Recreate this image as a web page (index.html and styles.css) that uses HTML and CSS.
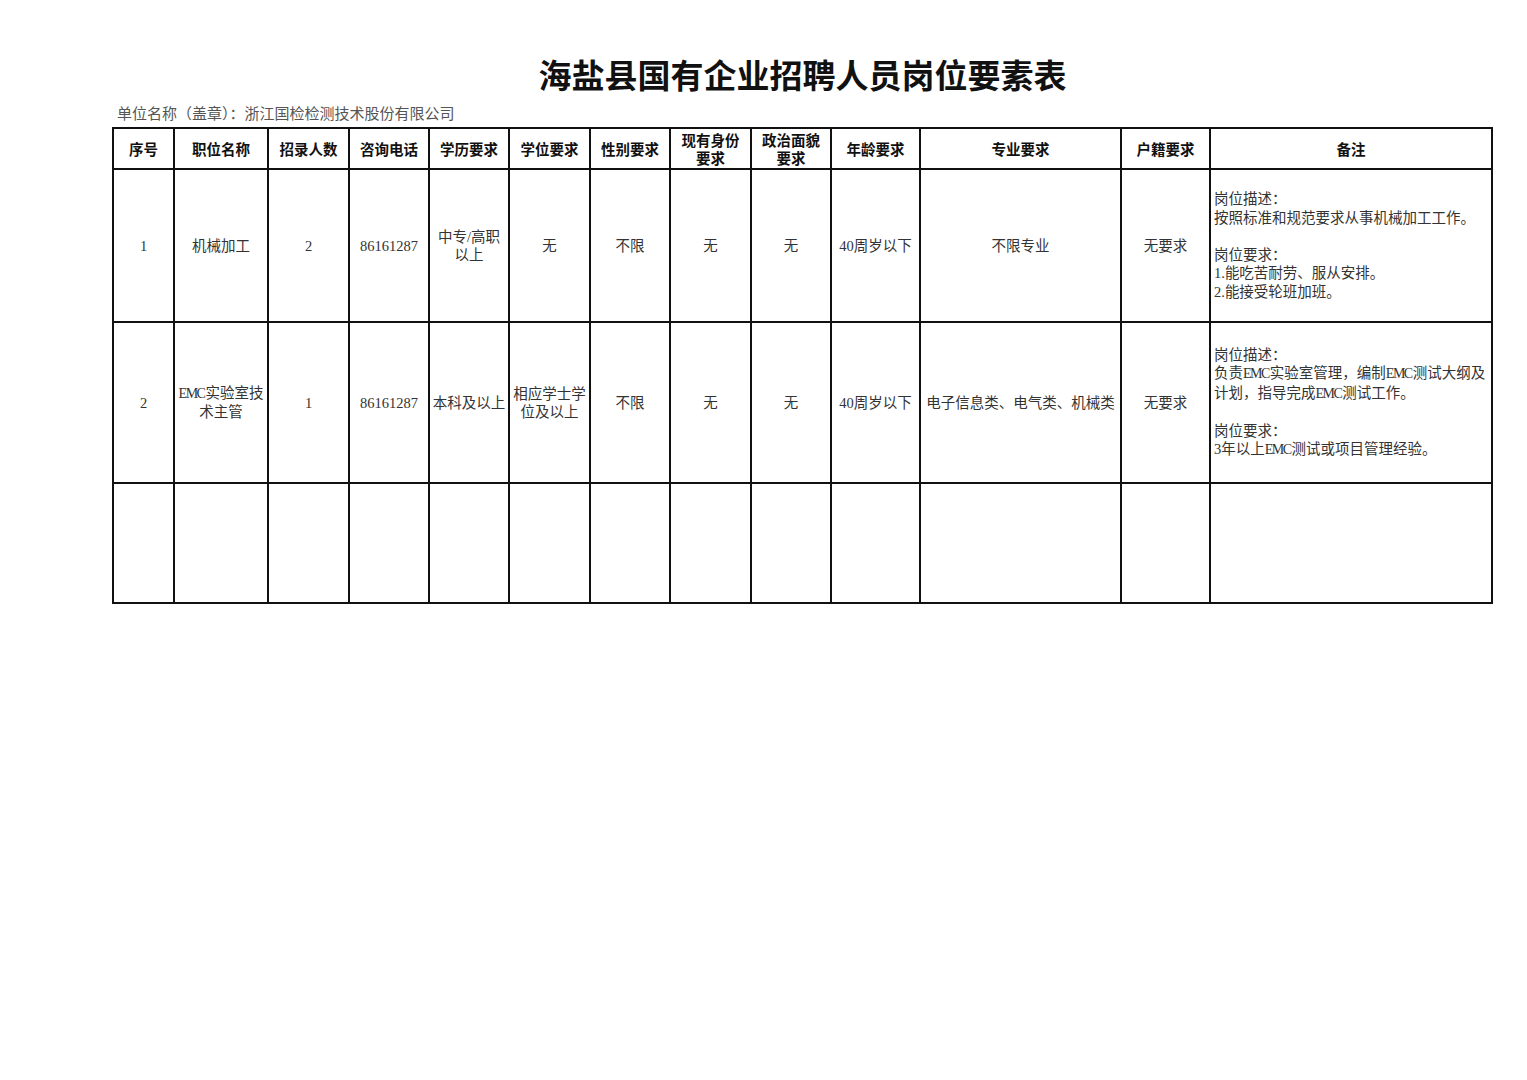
FILE: index.html
```html
<!DOCTYPE html>
<html lang="zh-CN">
<head>
<meta charset="utf-8">
<title>海盐县国有企业招聘人员岗位要素表</title>
<link rel="stylesheet" href="styles.css">
</head>
<body>
<div class="page">
  <h1 class="title">海盐县国有企业招聘人员岗位要素表</h1>
  <div class="unit">单位名称（盖章）：浙江国检检测技术股份有限公司</div>
  <table class="grid">
    <colgroup>
      <col class="c1"><col class="c2"><col class="c3"><col class="c4"><col class="c5"><col class="c6"><col class="c7"><col class="c8"><col class="c9"><col class="c10"><col class="c11"><col class="c12"><col class="c13">
    </colgroup>
    <thead>
      <tr class="head">
        <th>序号</th><th>职位名称</th><th>招录人数</th><th>咨询电话</th><th>学历要求</th><th>学位要求</th><th>性别要求</th><th>现有身份<br>要求</th><th>政治面貌<br>要求</th><th>年龄要求</th><th>专业要求</th><th>户籍要求</th><th>备注</th>
      </tr>
    </thead>
    <tbody>
      <tr class="r1">
        <td>1</td><td>机械加工</td><td>2</td><td>86161287</td><td>中专/高职<br>以上</td><td>无</td><td>不限</td><td>无</td><td>无</td><td>40周岁以下</td><td>不限专业</td><td>无要求</td>
        <td class="note">岗位描述：<br>按照标准和规范要求从事机械加工工作。<br><br>岗位要求：<br>1.能吃苦耐劳、服从安排。<br>2.能接受轮班加班。</td>
      </tr>
      <tr class="r2">
        <td>2</td><td class="nowrap"><span class="emc">EMC</span>实验室技<br>术主管</td><td>1</td><td>86161287</td><td class="nowrap">本科及以上</td><td class="nowrap">相应学士学<br>位及以上</td><td>不限</td><td>无</td><td>无</td><td>40周岁以下</td><td>电子信息类、电气类、机械类</td><td>无要求</td>
        <td class="note">岗位描述：<br>负责<span class="emc">EMC</span>实验室管理，编制<span class="emc">EMC</span>测试大纲及<br>计划，指导完成<span class="emc">EMC</span>测试工作。<br><br>岗位要求：<br>3年以上<span class="emc">EMC</span>测试或项目管理经验。</td>
      </tr>
      <tr class="r3">
        <td></td><td></td><td></td><td></td><td></td><td></td><td></td><td></td><td></td><td></td><td></td><td></td><td></td>
      </tr>
    </tbody>
  </table>
</div>
</body>
</html>
```

FILE: styles.css
```css
html, body {
  margin: 0;
  padding: 0;
  background: #ffffff;
}

.page {
  padding: 52px 0 0 112px;
  width: 1381px;
}

.title {
  margin: 0;
  text-align: center;
  font-family: "Noto Sans CJK SC", sans-serif;
  font-weight: 700;
  font-size: 33px;
  line-height: 44px;
  color: #111;
}

.unit {
  margin: 8px 0 3px 5px;
  font-family: "Liberation Serif", "Noto Sans CJK SC", serif;
  font-size: 15px;
  line-height: 20px;
  color: #555;
}

.grid {
  border-collapse: collapse;
  table-layout: fixed;
  width: 1381px;
  font-family: "Liberation Serif", "Noto Sans CJK SC", serif;
  font-size: 14.5px;
  color: #333;
}

.grid th,
.grid td {
  border: 2px solid #111;
  padding: 0 2px;
  text-align: center;
  vertical-align: middle;
  line-height: 18px;
  overflow: hidden;
}

.grid th {
  font-family: "Noto Sans CJK SC", sans-serif;
  font-weight: 700;
  font-size: 14.5px;
  color: #111;
  line-height: 18px;
}

.grid td.nowrap {
  white-space: nowrap;
  padding: 0;
}

.emc {
  font-size: 14px;
  letter-spacing: -1.5px;
  margin-right: 1px;
}

.c1 { width: 61px; }
.c2 { width: 94px; }
.c3 { width: 81px; }
.c4 { width: 80px; }
.c5 { width: 80px; }
.c6 { width: 81px; }
.c7 { width: 80px; }
.c8 { width: 81px; }
.c9 { width: 80px; }
.c10 { width: 89px; }
.c11 { width: 201px; }
.c12 { width: 89px; }
.c13 { width: 282px; }

.head { height: 41px; }
.r1 { height: 153px; }
.r2 { height: 161px; }
.r3 { height: 120px; }

.grid td.note {
  text-align: left;
  white-space: nowrap;
  padding: 0 0 0 3px;
  line-height: 18.5px;
}
```
